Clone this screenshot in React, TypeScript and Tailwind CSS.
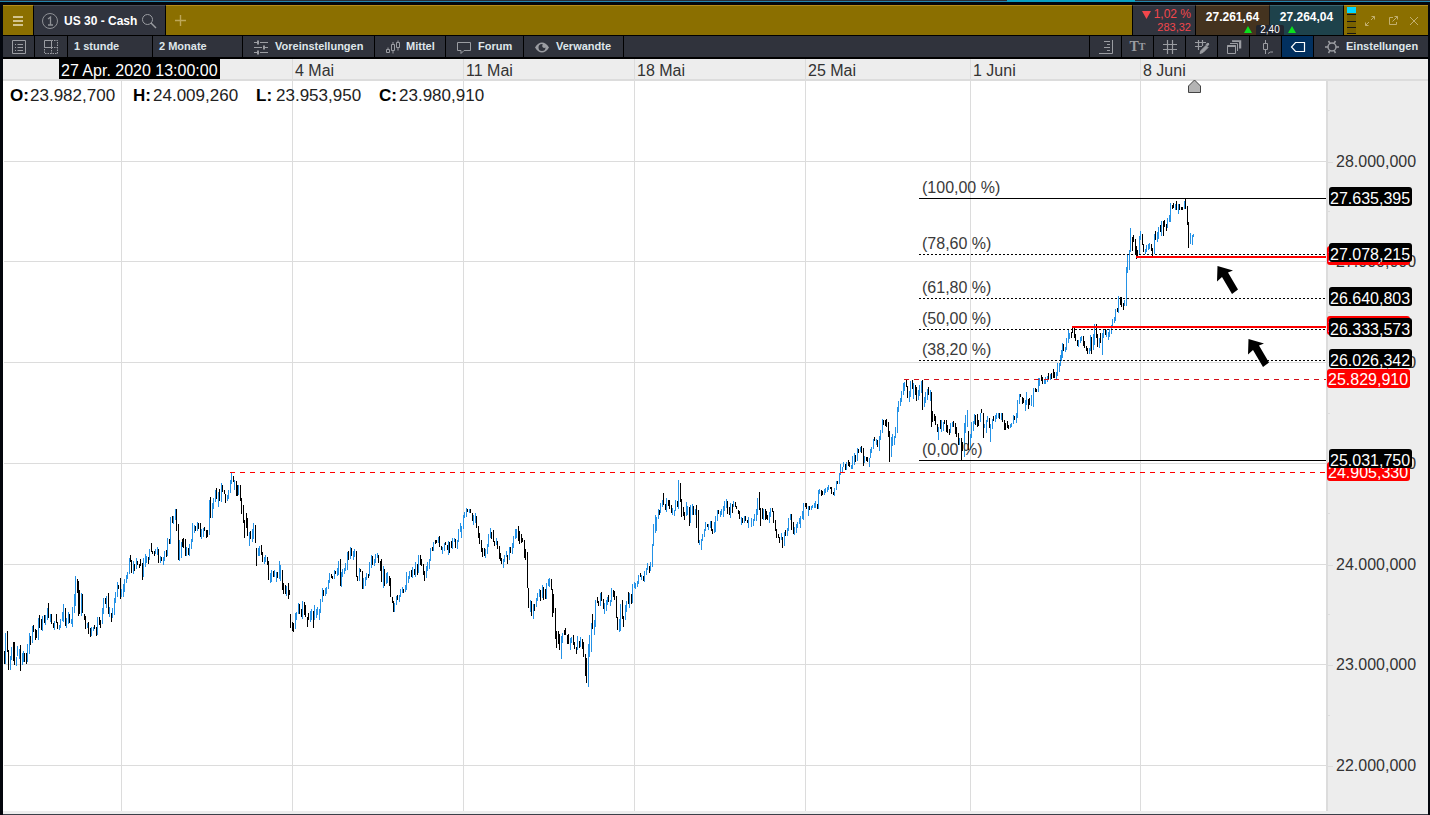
import type { ReactNode } from 'react'
import clsx from 'clsx'

// visible range of the plot, all chart coordinates below are in this space
const X0 = 3
const Y0 = 81
const W = 1323
const H = 730

const left = (x: number) => `${((x - X0) / W) * 100}%`
const top = (y: number) => `${((y - Y0) / H) * 100}%`

// x:high:low, a trailing + marks a rising bar
const bars = `
4:651:664 5:633:664+ 7:631:652 8:650:670 10:656:670+ 11:647:660+ 13:642:661 14:642:665 16:657:666+ 17:646:656+
19:649:659+ 20:645:671 22:653:665+ 23:651:662+ 24:653:662 26:653:664 27:644:662+ 29:633:654+ 30:636:645 32:626:643+
33:625:632 35:629:640 36:630:638 38:618:640+ 39:615:628 41:619:630 42:616:631+ 44:615:623 45:615:625+ 47:608:620+
48:603:618 50:614:622+ 51:614:624 53:623:628 54:621:630+ 56:614:623 57:622:629 59:625:630+ 60:619:628+ 62:612:621+
63:604:622+ 65:608:626 66:618:628+ 68:612:624+ 69:614:623 71:619:624+ 72:607:627+ 74:594:613+ 75:576:606+ 77:579:593
78:581:616 79:590:614 81:593:616+ 82:594:613 84:614:620 85:616:629 87:623:628+ 88:622:634 90:628:637 91:627:636+
93:627:631+ 94:625:629 96:627:636 97:617:635+ 99:617:625 100:620:628 102:608:624+ 103:598:614+ 105:598:604 106:596:608+
108:593:614 109:607:617+ 111:613:622 112:608:618+ 114:598:615+ 115:592:603+ 117:582:597+ 118:585:589 120:578:599 121:589:597+
123:584:597+ 124:579:592+ 126:575:583+ 127:572:579+ 129:558:574+ 130:555:562 131:560:573 133:561:574+ 134:564:571 136:558:569+
137:561:565 139:564:568 140:559:566 142:563:580 143:558:577+ 145:554:567+ 146:556:563+ 148:557:564 149:549:560+ 151:543:552
152:551:554 154:551:556 155:549:554+ 157:547:555+ 158:549:563 160:556:563+ 161:557:561 163:557:565+ 164:551:561+ 166:550:557
167:538:556+ 169:539:544 170:517:544+ 172:516:523 173:516:524+ 175:509:520+ 176:509:531 178:524:560 179:540:561+ 181:542:558+
182:539:547 183:538:548 185:539:556 186:547:556+ 188:548:555 189:544:556+ 191:539:549+ 192:523:542+ 194:525:533+ 195:526:531
197:522:531+ 198:523:529 200:523:537 201:529:539+ 203:528:537+ 204:527:531 206:530:538 207:530:537 209:500:535+ 210:497:518
212:503:518+ 213:498:509+ 215:490:502+ 216:488:499 218:492:507+ 219:489:501 221:483:502+ 222:485:492 224:490:494 225:494:503
227:495:501+ 228:490:499+ 230:480:493+ 231:473:484+ 233:476:482 234:480:490+ 236:481:496 237:485:496 238:485:495+ 240:485:501
241:498:514 243:505:523 244:520:538 246:513:528 247:518:536 249:532:546+ 250:531:539 252:529:542+ 253:523:539+ 255:525:543
256:548:566 258:548:556+ 259:546:556+ 261:545:555 262:552:562 264:557:564+ 265:555:562+ 267:557:565 268:561:580 270:573:583+
271:570:582+ 273:571:577 274:570:577+ 276:572:582+ 277:572:578 279:561:579+ 280:565:581+ 282:570:590 283:583:594 285:585:594
286:586:596+ 288:583:599 289:590:595 290:614:628 292:622:631 293:623:632 295:613:629+ 296:612:620+ 298:603:614+ 299:604:614
301:609:617 302:601:619+ 304:602:615 305:605:617 307:617:627 308:613:620 310:611:622+ 311:609:620+ 313:611:628 314:605:620+
316:609:618+ 317:607:615+ 319:609:620+ 320:599:613+ 322:588:602+ 323:590:596 325:588:596+ 326:587:594+ 328:580:589+ 329:573:583+
331:574:578 332:576:579 334:570:579+ 335:571:574 337:568:576+ 338:561:575+ 340:559:586 341:572:587+ 342:569:577+ 344:568:574+
345:563:571+ 347:552:570+ 348:551:560 350:547:559+ 351:548:556 353:551:560+ 354:549:557+ 356:551:577 357:576:581 359:568:581+
360:569:572 362:571:589 363:578:589+ 365:577:586+ 366:573:580+ 368:574:578 369:562:576+ 371:555:568+ 372:556:565 374:559:566+
375:554:563+ 377:553:558+ 378:555:563 380:561:571 381:559:582 383:566:588+ 384:569:586 386:573:584+ 387:572:583+ 389:576:586
390:578:597 392:597:603 393:601:612 394:603:612+ 396:596:605+ 397:595:600 399:595:602+ 400:589:597+ 402:587:593+ 403:589:593
405:585:592+ 406:572:590+ 408:576:583+ 409:571:579+ 411:570:577 412:567:578+ 414:569:575 415:562:577+ 417:564:575 418:555:573+
420:555:565 421:559:566 423:564:575 424:571:581 426:566:578+ 427:562:571+ 429:559:569+ 430:548:561+ 432:547:551 433:542:551+
435:540:544 436:540:543 438:537:543+ 439:536:547 441:546:550 442:547:554+ 444:543:551+ 445:542:545 447:545:550 448:541:555+
449:542:553 451:541:548 452:538:549+ 454:538:542+ 455:539:548 457:540:549+ 458:529:542+ 460:523:532+ 461:526:538+ 463:515:529+
464:512:518+ 466:508:517+ 467:509:512 469:509:513+ 470:509:513 472:513:521 473:515:525+ 475:513:523+ 476:516:528 478:526:538
479:533:544 481:540:552 482:548:557 484:548:556 485:549:558+ 487:544:554+ 488:534:547+ 490:528:538+ 491:532:539 493:530:542
494:541:546 496:538:545+ 497:541:549 499:546:559 500:553:561 501:558:564 503:559:568+ 504:555:562+ 506:551:557+ 507:555:564
509:547:560+ 510:547:553 512:543:554+ 513:536:548+ 515:529:539+ 516:529:538+ 518:526:541 519:531:544 521:534:543 522:538:542
524:540:558 525:549:560 527:552:588 528:588:608 530:600:612+ 531:601:616 533:604:619+ 534:604:611 536:598:607+ 537:593:601+
539:589:597+ 540:590:601 542:585:598+ 543:587:600 545:589:599 546:583:599+ 548:579:586+ 549:578:587+ 551:579:590 552:589:617
553:594:613 555:608:639 556:631:648 558:631:644 559:634:650 561:636:659+ 562:633:643+ 564:630:635 565:628:635 567:635:644
568:634:644 570:638:650+ 571:637:643+ 573:635:645 574:642:649 576:647:654 577:636:650+ 579:641:648 580:637:647+ 582:639:649
583:642:657 585:654:676 586:658:683 588:644:687+ 589:635:657+ 591:623:652+ 592:614:629 594:620:635+ 595:600:627+ 597:597:603
598:601:606 600:593:606+ 601:592:601 603:599:609 604:603:614+ 606:600:611+ 607:597:605+ 608:595:602 610:600:606+ 611:588:602+
613:590:597 614:591:600 616:596:618 617:617:630 619:619:632+ 620:604:631+ 622:600:619 623:616:627 625:605:620+ 626:601:612+
628:592:604 629:593:608+ 631:594:604 632:584:603+ 634:582:588+ 635:583:589+ 637:581:587+ 638:575:584+ 640:573:577 641:575:580+
643:576:581 644:571:582+ 646:568:575+ 647:563:570+ 649:566:573 650:562:571+ 652:544:567+ 653:524:546+ 655:515:533+ 656:517:531+
658:509:519+ 659:510:515 660:503:513+ 662:500:507+ 663:493:505 665:504:510 666:498:512+ 668:500:506 669:500:509 671:505:513
672:508:515+ 674:510:516+ 675:500:511+ 677:501:507 678:480:509+ 680:483:502 681:499:517 683:507:516 684:512:520 686:502:516+
687:506:515+ 689:507:526 690:505:523+ 692:504:515+ 693:506:515 695:509:515+ 696:505:528 698:510:543 699:540:545+ 701:539:550+
702:534:541+ 704:529:537+ 705:522:531+ 707:524:527 708:524:530+ 710:521:528+ 711:521:531 712:529:534 714:522:533+ 715:516:532+
717:510:521+ 718:510:514 720:511:517+ 721:509:515+ 723:506:517+ 724:501:511+ 726:499:508+ 727:501:514 729:507:515 730:503:518+
732:504:513 733:501:507+ 735:502:507 736:506:509 738:510:514 739:511:519 741:517:525+ 742:518:523 744:516:523+ 745:516:521
747:520:523 748:517:528+ 751:518:527+ 753:519:526+ 754:514:521+ 756:509:521+ 757:498:515+ 759:492:510 760:508:526 762:508:519
763:509:520+ 765:509:520 766:511:519 767:515:520 769:512:523+ 770:508:517+ 772:508:512 773:511:523 775:520:531 776:529:538
778:534:538 779:537:543 781:533:540+ 782:537:548 784:532:546+ 785:530:536 787:528:536+ 788:518:531+ 790:514:520+ 791:514:530
793:522:534 794:527:535+ 796:524:533+ 797:522:528+ 799:518:524+ 800:516:528+ 802:511:519+ 803:503:520+ 805:503:507 806:503:509
808:506:516+ 809:506:510 811:506:510+ 812:505:508+ 814:503:508+ 815:501:508+ 817:504:509 818:490:509+ 819:489:494+ 821:490:496
822:491:495 824:489:495+ 825:488:493+ 827:487:492+ 828:485:490+ 830:487:489 831:487:494 833:492:495 834:488:496+ 836:481:490+
837:481:484 839:473:484+ 840:464:475+ 842:467:472+ 843:462:467+ 845:464:470 846:462:470+ 848:460:466 849:462:467 851:465:469+
852:456:469+ 854:453:465+ 855:455:462 857:448:461+ 858:449:453 860:447:452+ 861:446:453 863:448:466 864:456:463+ 866:457:461
867:457:462 869:458:467+ 870:449:458+ 871:447:453+ 873:439:449+ 874:437:441 876:439:445+ 877:440:447 879:436:451+ 880:430:440+
882:419:433+ 883:420:425 885:420:426 886:419:427 888:422:437 889:431:462 891:437:457+ 892:434:446+ 894:436:445+ 895:427:438+
897:407:433+ 898:401:412+ 900:398:406+ 901:391:402+ 903:383:395+ 904:382:391+ 906:380:387 907:386:398 909:391:402+ 910:381:397+
912:380:389 913:383:399+ 915:385:395 916:387:401 918:390:400+ 919:385:396+ 921:381:393+ 922:380:410 924:397:407+ 925:392:403+
927:389:400+ 928:387:395 930:390:401+ 931:392:427 932:411:422 934:414:421 935:416:425 937:424:432 938:427:440+ 940:420:429
941:420:432+ 943:422:431+ 944:420:424 946:420:432 947:425:433 949:429:435 950:423:433+ 952:422:427+ 953:421:427 955:423:434
956:427:437 958:433:445 959:438:445+ 961:438:460 962:442:451 964:423:457+ 965:415:433+ 967:410:427+ 968:431:450 970:434:450+
971:422:438+ 973:421:431+ 974:414:424+ 975:415:425 977:414:427 978:420:426 980:413:422+ 981:409:413 983:413:438 984:424:428+
986:420:433+ 987:416:422+ 989:418:428 990:424:442+ 992:419:429+ 993:416:421 995:415:422+ 996:413:419+ 998:413:418+ 999:413:419
1001:413:420+ 1002:413:422 1004:420:430 1005:423:430 1007:421:428 1008:425:429 1010:424:428+ 1011:423:427+ 1013:415:424+
1014:416:420 1016:413:423+ 1017:400:418+ 1019:394:404+ 1020:394:397 1022:397:404 1023:398:403 1025:400:411+ 1026:392:405+
1028:399:409 1029:398:405 1031:395:406+ 1033:388:407+ 1035:388:392 1036:389:392 1038:378:392+ 1039:378:386+ 1041:375:381
1042:377:384 1044:379:384+ 1045:377:384+ 1047:376:382+ 1048:373:379 1050:374:380+ 1051:373:379 1053:369:378 1054:372:378
1056:372:380+ 1057:363:376+ 1059:363:372+ 1060:355:366+ 1061:350:361+ 1062:343:358+ 1063:344:351 1065:347:352+ 1066:338:350+
1068:330:343+ 1069:333:339+ 1071:332:338 1072:327:333 1074:328:338 1075:334:341 1077:340:346 1078:340:347+ 1080:337:343+
1081:336:341+ 1083:336:346 1084:341:348 1086:346:351 1087:348:354 1089:348:354+ 1090:335:351+ 1091:337:354 1093:334:350+
1094:324:345+ 1096:324:338 1097:334:347 1099:338:348+ 1100:333:343 1102:333:355+ 1103:329:338+ 1105:329:335 1106:330:337+
1108:332:340+ 1109:329:337+ 1111:325:334+ 1112:319:326+ 1114:317:323+ 1115:309:321+ 1117:308:312 1118:296:313+ 1120:297:305
1121:297:307 1123:303:310 1124:300:306+ 1126:267:306+ 1127:254:273+ 1129:250:270+ 1130:228:252+ 1132:237:251 1133:235:242
1135:239:254 1136:246:259 1137:250:258 1139:236:255+ 1140:231:240+ 1142:234:245 1143:244:252 1145:249:254+ 1146:245:252+
1148:244:250+ 1149:243:249+ 1151:244:251 1152:248:256 1154:234:254+ 1155:231:240 1157:232:242+ 1158:227:239+ 1160:225:232
1161:221:236+ 1163:221:236 1164:220:227 1166:224:231 1167:218:228+ 1169:215:222+ 1170:203:222+ 1172:205:209 1173:203:208
1175:204:210+ 1176:201:210 1178:204:214+ 1179:204:210 1181:207:210 1182:207:210 1184:201:209+ 1185:199:209 1187:206:225
1188:222:248 1190:233:244+ 1192:235:245+ 1193:234:237+
`
  .trim()
  .split(/\s+/)

const toPath = (list: string[]) =>
  list
    .map((bar) => {
      const [x, hi, lo] = bar.replace('+', '').split(':')
      return `M${x} ${hi}h1V${lo}h-1z`
    })
    .join('')

const risingPath = toPath(bars.filter((b) => b.endsWith('+')))
const fallingPath = toPath(bars.filter((b) => !b.endsWith('+')))

const dates = [
  { label: '', x: 121 },
  { label: '4 Mai', x: 292 },
  { label: '11 Mai', x: 463 },
  { label: '18 Mai', x: 634 },
  { label: '25 Mai', x: 805 },
  { label: '1 Juni', x: 970 },
  { label: '8 Juni', x: 1140 },
]

const prices = [
  { label: '28.000,000', y: 161 },
  { label: '27.000,000', y: 261 },
  { label: '26.000,000', y: 362 },
  { label: '25.000,000', y: 463 },
  { label: '24.000,000', y: 564 },
  { label: '23.000,000', y: 664 },
  { label: '22.000,000', y: 765 },
]

const halfSteps = [110, 211, 312, 413, 513, 614, 715]

const fibLevels = [
  { label: '(100,00 %)', price: '27.635,395', y: 198, solid: true },
  { label: '(78,60 %)', price: '27.078,215', y: 254 },
  { label: '(61,80 %)', price: '26.640,803', y: 298 },
  { label: '(50,00 %)', price: '26.333,573', y: 329 },
  { label: '(38,20 %)', price: '26.026,342', y: 360 },
  { label: '(0,00 %)', price: '25.031,750', y: 460, solid: true },
]

const redTags = [
  { price: '27.050,000', y: 256 },
  { price: '26.350,000', y: 326 },
  { price: '25.829,910', y: 379 },
  { price: '24.905,330', y: 472 },
]

const ohlc = [
  ['O:', '23.982,700'],
  ['H:', '24.009,260'],
  ['L:', '23.953,950'],
  ['C:', '23.980,910'],
]

function Icon({ className, children }: { className?: string; children: ReactNode }) {
  return (
    <svg
      viewBox="0 0 16 16"
      className={clsx('size-4 shrink-0', className)}
      fill="none"
      stroke="currentColor"
      strokeWidth="1"
      aria-hidden="true"
    >
      {children}
    </svg>
  )
}

function ToolButton({
  label,
  title,
  className,
  children,
}: {
  label?: string
  title?: string
  className?: string
  children?: ReactNode
}) {
  return (
    <button
      type="button"
      aria-label={title}
      className={clsx(
        'flex h-full shrink-0 items-center border-black text-[11px] font-bold whitespace-nowrap text-[#9b9da2]',
        className,
      )}
    >
      {children}
      {label && <span className="text-[#dfe6ea]">{label}</span>}
    </button>
  )
}

function Header() {
  return (
    <header className="flex h-[30px] bg-[#8b6f00]">
      <button
        type="button"
        aria-label="Menü"
        className="flex w-[31px] items-center justify-center border-t border-r border-t-[#b68d1c] border-r-black text-[#d3c48e]"
      >
        <svg viewBox="0 0 10 10" className="size-[10px]" fill="currentColor">
          <path d="M0 0h10v2H0zM0 4h10v2H0zM0 8h10v2H0z" />
        </svg>
      </button>
      <div className="flex w-[132px] items-center border-t border-r border-t-[#4a4d57] border-r-black bg-[#31343e] pl-[7px]">
        <svg viewBox="0 0 18 18" className="size-[18px]" fill="none" stroke="#8f9196">
          <circle cx="9" cy="9" r="7.5" />
          <path d="M7 7l2.5-2v8M7 13h5" strokeWidth="1.3" />
        </svg>
        <h1 className="ml-[5px] text-xs font-bold text-white">US 30 - Cash</h1>
        <button type="button" aria-label="Suchen" className="ml-[4px]">
          <Icon className="text-[#9b9da2]">
            <circle cx="6.5" cy="6.5" r="5" />
            <path d="M10 10l5 5" strokeWidth="1.4" />
          </Icon>
        </button>
      </div>
      <button
        type="button"
        aria-label="Neuer Tab"
        className="flex flex-1 items-center border-t border-[#b68d1c] pl-[9px] text-[#bda75a]"
      >
        <svg viewBox="0 0 11 11" className="size-[11px]" stroke="currentColor" strokeWidth="1.4">
          <path d="M5.5 0v11M0 5.5h11" />
        </svg>
      </button>

      {/* Change + prices */}
      <div className="relative flex">
        <div className="w-[64px] border-x border-t border-x-black border-t-[#4a4d57] bg-[#31343e] pr-[4px] text-right text-[11px] leading-[13px] text-[#f2474c]">
          <div className="flex items-center justify-end gap-[3px] pt-[2px] text-xs leading-[13px]">
            <svg viewBox="0 0 9 8" className="h-2 w-[9px]" fill="currentColor">
              <path d="M0 0h9L4.500 8z" />
            </svg>
            1,02 %
          </div>
          <div>283,32</div>
        </div>
        <button
          type="button"
          className="w-[74px] border-t border-r border-t-[#6b583c] border-r-[#161a1c] bg-[#44331f] pb-2 text-xs font-bold text-white"
        >
          27.261,64
        </button>
        <button
          type="button"
          className="w-[74px] border-t border-r border-t-[#3c6670] border-r-black bg-[#1e424b] pb-2 text-xs font-bold text-white"
        >
          27.264,04
        </button>
        <div className="absolute right-[48px] bottom-0 flex items-end gap-[4px]">
          <svg viewBox="0 0 8 7" className="mb-[2px] h-[7px] w-2" fill="#0be01d">
            <path d="M4 0l4 7H0z" />
          </svg>
          <span className="h-[10px] w-[28px] rounded-t-xs bg-[#20242d] text-center text-[10px] leading-[10px] text-white">
            2,40
          </span>
          <svg viewBox="0 0 8 7" className="mb-[2px] h-[7px] w-2" fill="#0be01d">
            <path d="M4 0l4 7H0z" />
          </svg>
        </div>
      </div>

      {/* Window controls */}
      <div className="flex w-[84px] items-center border-t border-[#b68d1c] pl-[3px] text-[#c3b070]">
        <svg viewBox="0 0 9 29" className="h-[29px] w-[9px]" shapeRendering="crispEdges">
          <path d="M0 1h9v27H0z" fill="#7a6200" />
          <path d="M0 1h9v6H0z" fill="#00d8ff" />
          <path d="M0 8h9v1H0zM0 15h9v1H0zM0 21h9v1H0zM0 27h9v1H0z" fill="#151515" />
        </svg>
        <div className="flex flex-1 items-center justify-between pr-[9px] pl-[8px]">
          <button type="button" aria-label="Maximieren">
            <svg viewBox="0 0 12 12" className="size-3" fill="none" stroke="currentColor">
              <path d="M7.500 1.500h3v3M10.500 1.500l-3.500 3.500M4.500 10.500h-3v-3M1.500 10.500l3.500-3.500" />
            </svg>
          </button>
          <button type="button" aria-label="Fenster lösen">
            <svg viewBox="0 0 12 12" className="size-3" fill="none" stroke="currentColor">
              <path d="M6 2.500H2.500v7h7V7M7.500 1.500h3v3M10.500 1.500L5.500 6.500" />
            </svg>
          </button>
          <button type="button" aria-label="Schließen">
            <svg viewBox="0 0 10 10" className="size-[10px]" fill="none" stroke="currentColor">
              <path d="M1 1l8 8M9 1l-8 8" />
            </svg>
          </button>
        </div>
      </div>
    </header>
  )
}

function Toolbar() {
  return (
    <nav className="flex h-[24px] border-t border-b-2 border-black bg-[#30333c]">
      <ToolButton title="Liste" className="w-[32px] justify-center border-r">
        <Icon>
          <path d="M1.500 1.500h13v13h-13zM4 5.500h1M6.500 5.500h5.500M4 8.500h1M6.500 8.500h5.500M4 11.500h1M6.500 11.500h5.500" />
        </Icon>
      </ToolButton>
      <ToolButton title="Layout" className="w-[33px] justify-center border-r">
        <Icon>
          <path d="M1.500 1.500h7v7h-7z" />
          <path d="M8.500 1.500h6v13h-13v-6M8.500 8.500h6M8.500 8.500v6" strokeDasharray="1.500 1" />
        </Icon>
      </ToolButton>
      <ToolButton label="1 stunde" className="w-[85px] border-r pl-[6px]" />
      <ToolButton label="2 Monate" className="w-[90px] border-r pl-[6px]" />
      <ToolButton label="Voreinstellungen" className="w-[132px] gap-[6px] border-r pl-[10px]">
        <Icon>
          <path d="M1 3.500h4M7 3.500h8M1 8.500h8M11 8.500h4M1 13.500h4M7 13.500h8" />
          <path d="M5 1.500v4M11 6.500v4M5 11.500v4" strokeWidth="2" />
        </Icon>
      </ToolButton>
      <ToolButton label="Mittel" className="w-[71px] gap-[5px] border-r pl-[10px]">
        <Icon>
          <path d="M1.500 10.500h3v3h-3zM6.500 5.500h3v6h-3zM11.500 3.500h3v5h-3zM3 8.500v2M8 3v2.500M8 11.500v3M13 1.500v2M13 8.500v3" />
        </Icon>
      </ToolButton>
      <ToolButton label="Forum" className="w-[78px] gap-[6px] border-r pl-[10px]">
        <Icon>
          <path d="M1.500 3.500h13v8H8l-3 3v-3H1.500z" />
        </Icon>
      </ToolButton>
      <ToolButton label="Verwandte" className="w-[100px] gap-[6px] border-r pl-[10px]">
        <Icon>
          <path
            fillRule="evenodd"
            fill="currentColor"
            stroke="none"
            d="M1 8.500C3 5 5.500 3.500 8 3.500s5 1.500 7 5c-2 3.500-4.500 5-7 5s-5-1.500-7-5zM8 5a3.500 3.500 0 1 0 3.500 3.500c-1.500 1-3.500 0-3.200-1.800C8.300 6 8.600 5.300 9 5.100z"
          />
        </Icon>
      </ToolButton>
      <div className="flex-1" />
      <ToolButton title="Skala" className="w-[33px] justify-center border-x">
        <Icon>
          <path d="M14.500 1v13.500H1M6 2.500h6M9 5.500h3M6 8.500h6M9 11.500h3" />
        </Icon>
      </ToolButton>
      <ToolButton title="Text" className="w-[32px] items-baseline justify-center border-r">
        <span className="font-['Liberation_Serif'] text-sm leading-5">T</span>
        <span className="font-['Liberation_Serif'] text-[10px] leading-5">T</span>
      </ToolButton>
      <ToolButton title="Raster" className="w-[32px] justify-center border-r">
        <Icon>
          <path d="M5.500 1v14M10.500 1v14M1 5.500h14M1 10.500h14" strokeWidth="1.200" />
        </Icon>
      </ToolButton>
      <ToolButton title="Zeichnen" className="w-[32px] justify-center border-r">
        <Icon>
          <path d="M4.500 1v10M8.500 1v6M1 3.500h11M1 7.500h7" strokeWidth="1.200" />
          <path d="M6 14.500l1-3 5-5 2 2-5 5zM12 5.500l2-1.500 1 1-1.500 2z" fill="currentColor" />
        </Icon>
      </ToolButton>
      <ToolButton title="Ebenen" className="w-[32px] justify-center border-r">
        <Icon>
          <path d="M1.500 6.500h8v8h-8zM4 4.500h7.500V12M6.500 2.500h7V9.500" />
          <path d="M6 2h8.500v7.500" strokeWidth="1.500" />
          <path d="M1.500 7h8" strokeWidth="2" />
        </Icon>
      </ToolButton>
      <ToolButton title="Kerze" className="w-[32px] justify-center border-r">
        <Icon>
          <path d="M5.500 4.500h4v6h-4zM7.500 1v3M7.500 11v4M10 14.500l2.500-1.500h2.500" />
        </Icon>
      </ToolButton>
      <ToolButton title="Preismarke" className="w-[32px] justify-center border-r bg-[#02305f] text-white">
        <Icon className="text-white">
          <path d="M5.500 3.500h9v9h-9l-4-4.500z" strokeWidth="1.200" />
        </Icon>
      </ToolButton>
      <ToolButton label="Einstellungen" className="w-[114px] gap-[6px] pl-[10px]">
        <Icon>
          <circle cx="8" cy="8" r="4" strokeWidth="1.500" />
          <path
            d="M12 8h3M1 8h3M10 11.500l1.500 2.500M4.500 2L6 4.500M10 4.500l1.500-2.500M4.500 14L6 11.500"
            strokeWidth="1.500"
          />
        </Icon>
      </ToolButton>
    </nav>
  )
}

function Plot() {
  return (
    <div className="relative min-w-0 flex-1 bg-white">
      <svg
        viewBox={`${X0} ${Y0} ${W} ${H}`}
        preserveAspectRatio="none"
        className="absolute inset-0 size-full overflow-visible"
        role="img"
        aria-label="US 30 - Cash"
      >
        <g shapeRendering="crispEdges">
          <g fill="#dcdcdc">
            {dates.map((d) => (
              <rect key={d.x} x={d.x} y={Y0} width="1" height={H} />
            ))}
            {prices.map((p) => (
              <rect key={p.y} x={X0 + 1} y={p.y} width={W} height="1" />
            ))}
          </g>
          <path d={risingPath} fill="#2492e6" />
          <path d={fallingPath} fill="#000" />
          {fibLevels.map((f) => (
            <path
              key={f.y}
              d={`M919 ${f.y + 0.5}H1326`}
              stroke="#000"
              strokeDasharray={f.solid ? undefined : '2 2'}
            />
          ))}
          <path d="M904 379.500H1326" stroke="#d40f18" strokeDasharray="5 5" />
          <path d="M230 472.500H1326" stroke="#f00" strokeDasharray="5 5" />
          <path d="M1136 257H1326M1072 327H1326" stroke="#f00" strokeWidth="2" />
        </g>
        <path id="arrow" d="M1217.500 266l15.500 4.500-5 2 10 17-6 4.500-10-17-5 4.500z" />
        <use href="#arrow" x="31" y="73" />
        <path d="M1188.500 86l6-6 6 6v6.500h-12z" fill="#b4b4b4" stroke="#444" />
      </svg>

      <dl className="relative flex pt-[4px] pl-[7px] text-[17px] leading-[22px] text-[#222]">
        {ohlc.map(([key, value]) => (
          <div key={key} className="flex w-[123px]">
            <dt className="w-[20px] font-bold text-black">{key}</dt>
            <dd>{value}</dd>
          </div>
        ))}
      </dl>

      {fibLevels.map((f) => (
        <span
          key={f.label}
          className="absolute -mt-[19px] whitespace-nowrap text-base leading-[18px] text-[#3a3a3a]"
          style={{ left: left(922), top: top(f.y) }}
        >
          {f.label}
        </span>
      ))}
    </div>
  )
}

function PriceAxis() {
  return (
    <aside className="relative w-[102px] shrink-0 border-l-2 border-[#dcdcdc] text-base leading-[18px]">
      {prices.map((p) => (
        <div
          key={p.y}
          className="absolute left-0 flex h-[18px] -translate-y-[8px] items-center text-[#333]"
          style={{ top: top(p.y) }}
        >
          <i className="mr-[3px] h-px w-[5px] bg-[#dcdcdc]" />
          {p.label}
        </div>
      ))}
      {halfSteps.map((y) => (
        <i key={y} className="absolute left-0 h-px w-[2px] bg-[#dcdcdc]" style={{ top: top(y) }} />
      ))}
      {redTags.map((t) => (
        <span
          key={t.price}
          className="absolute -left-px h-[19px] w-[83px] -translate-y-[10px] rounded-[3px] bg-[#f00] pl-px leading-[21px] text-white"
          style={{ top: top(t.y) }}
        >
          {t.price}
        </span>
      ))}
      {fibLevels.map((f) => (
        <span
          key={f.price}
          className="absolute left-px h-[19px] w-[83px] -translate-y-[11px] rounded-[3px] bg-black pl-px leading-[23px] text-white"
          style={{ top: top(f.y) }}
        >
          {f.price}
        </span>
      ))}
    </aside>
  )
}

export default function App() {
  return (
    <div className="flex h-screen flex-col bg-[#03060c] font-['Liberation_Sans',Arial,sans-serif]">
      {/* edge of the window behind, with its active tab */}
      <div className="flex h-[5px] shrink-0 items-start">
        <div className="h-[2px] flex-1 border-b border-[#2485ad] bg-[#2b2e37]" />
        <div className="h-[2px] w-[128px] bg-[#0b9fc0]" />
        <div className="h-[2px] w-[295px] border-b border-[#2485ad] bg-[#2b2e37]" />
      </div>

      <main className="mr-[2px] ml-[3px] flex min-h-0 flex-1 flex-col border-b border-[#3b3f48] bg-[#ededed]">
        <Header />
        <Toolbar />

        {/* Date axis */}
        <div className="flex h-[22px] shrink-0 border-b-2 border-[#dcdcdc] text-base leading-[24px] text-[#333]">
          <div className="relative flex-1">
            {dates.map((d) => (
              <span
                key={d.x}
                className="absolute h-full border-l border-[#dcdcdc] pl-[2px] whitespace-nowrap"
                style={{ left: left(d.x) }}
              >
                {d.label}
              </span>
            ))}
            <time
              dateTime="2020-04-27T13:00"
              className="absolute h-full w-[161px] bg-black pl-[2px] whitespace-nowrap text-white"
              style={{ left: left(59) }}
            >
              27 Apr. 2020 13:00:00
            </time>
          </div>
          <div className="w-[102px]" />
        </div>

        <div className="flex min-h-0 flex-1 pb-[3px]">
          <Plot />
          <PriceAxis />
        </div>
      </main>
    </div>
  )
}
